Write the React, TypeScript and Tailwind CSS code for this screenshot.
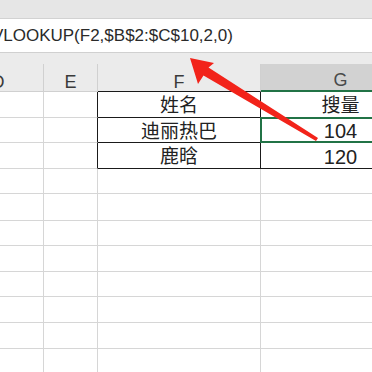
import React from "react";

const rows = [
  { f: "姓名", g: "搜量" },
  { f: "迪丽热巴", g: "104" },
  { f: "鹿晗", g: "120" },
];

const emptyRows = 8;

const cjk = { fontFamily: '"Liberation Sans", "Noto Sans CJK SC", sans-serif' };

const App: React.FC = () => {
  return (
    <div className="relative w-[372px] h-[372px] overflow-hidden bg-white" style={cjk}>
      {/* Top ribbon strip */}
      <div className="h-[19px] bg-[#e6e6e6] border-b border-[#d2d2d2]" />

      {/* Formula bar */}
      <div className="h-[34px] bg-white border-b border-[#d0d0d0] flex items-center overflow-hidden">
        <span className="ml-[-18px] text-[17px] leading-none text-[#2a2a2a] whitespace-nowrap">
          =VLOOKUP(F2,$B$2:$C$10,2,0)
        </span>
      </div>

      {/* Gap band */}
      <div className="h-[11px] bg-[#ebebeb]" />

      {/* Column headers + cells */}
      <div className="ml-[-47px] w-[467px] grid grid-cols-[91px_54px_163px_159px] grid-rows-[28px_26px_25px_26px_25px_27px_25px_26px_25px_26px_26px_26px]">
        {/* Headers */}
        <div className="bg-[#ebebeb] border-r border-b border-[#d0d0d0] flex items-end justify-center text-[18px] leading-none text-[#3a3a3a]">
          D
        </div>
        <div className="bg-[#ebebeb] border-r border-b border-[#d0d0d0] flex items-end justify-center text-[18px] leading-none text-[#3a3a3a]">
          E
        </div>
        <div className="bg-[#ebebeb] border-r border-[#d0d0d0] border-b border-b-[#1a1a1a] flex items-end justify-center text-[18px] leading-none text-[#3a3a3a]">
          F
        </div>
        <div className="bg-[#d2d2d2] border-b-2 border-[#217346] flex items-end justify-center pb-[1px] text-[18px] leading-none text-[#4a4a4a]">
          G
        </div>

        {/* Table rows */}
        {rows.map((r, i) => (
          <React.Fragment key={i}>
            <div className="border-r border-b border-[#d6d6d6]" />
            <div className="border-r border-[#1a1a1a] border-b border-b-[#d6d6d6]" />
            <div className="border-r border-b border-[#1a1a1a] flex items-center justify-center pt-[2px] text-[19px] leading-none text-[#222]">
              {r.f}
            </div>
            <div
              className={`relative border-b flex items-center justify-center pt-[2px] leading-none text-[#222] ${
                i === 0 ? "text-[19px] border-[#217346]" : "text-[20px] border-[#1a1a1a]"
              } ${i === 1 ? "border-b-[#217346]" : ""}`}
            >
              {i === 1 && (
                <div className="absolute inset-x-[-1px] top-[-1px] bottom-[-1px] border-2 border-[#217346] pointer-events-none" />
              )}
              {r.g}
            </div>
          </React.Fragment>
        ))}

        {/* Empty grid rows */}
        {Array.from({ length: emptyRows }).map((_, i) => (
          <React.Fragment key={`e${i}`}>
            <div className="border-r border-b border-[#d6d6d6]" />
            <div className="border-r border-b border-[#d6d6d6]" />
            <div className="border-r border-b border-[#d6d6d6]" />
            <div className="border-b border-[#d6d6d6]" />
          </React.Fragment>
        ))}
      </div>

      {/* Red annotation arrow */}
      <svg
        className="absolute left-0 top-0 pointer-events-none"
        width="372"
        height="372"
        viewBox="0 0 372 372"
      >
        <polygon
          points="190,58 214,63 208.5,67.5 318,138 316,141 203.5,75.5 198,84"
          fill="#f2231a"
        />
      </svg>
    </div>
  );
};

export default App;
